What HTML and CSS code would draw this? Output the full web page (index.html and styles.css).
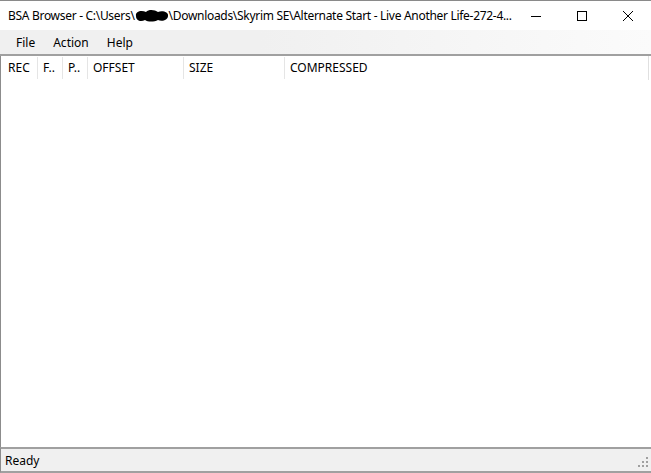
FILE: index.html
```html
<!DOCTYPE html>
<html lang="en">

<head>
    <meta charset="UTF-8">
    <title>BSA Browser</title>
    <link rel="stylesheet" href="styles.css">
</head>

<body>
    <div class="window">
        <div class="titlebar">
            <div class="title">BSA Browser - C:\Users\<svg class="blob" width="36" height="13" viewBox="0 0 36 13"><path d="M2 7 C1 2 8 1 12 3 C15 0 21 1 24 3 C28 1 35 3 34 7 C34 11 28 13 24 11 C20 13 14 13 11 11 C7 13 2 12 2 7 Z" fill="#000"/></svg>\Downloads\Skyrim SE\Alternate Start - Live Another Life-272-4...</div>
            <div class="controls">
                <div class="ctl"><svg width="10" height="10" viewBox="0 0 10 10"><path d="M0 5.5h10" stroke="#000" stroke-width="1"/></svg></div>
                <div class="ctl"><svg width="10" height="10" viewBox="0 0 10 10"><rect x="0.5" y="0.5" width="9" height="9" fill="none" stroke="#000" stroke-width="1"/></svg></div>
                <div class="ctl"><svg width="10" height="10" viewBox="0 0 10 10"><path d="M0 0L10 10M10 0L0 10" stroke="#000" stroke-width="1"/></svg></div>
            </div>
        </div>

        <div class="menubar">
            <span class="menu">File</span>
            <span class="menu">Action</span>
            <span class="menu">Help</span>
        </div>

        <div class="list">
            <div class="header">
                <div class="col first" style="width: 37px">REC</div>
                <div class="col" style="width: 25px">F..</div>
                <div class="col" style="width: 25px">P..</div>
                <div class="col" style="width: 96px">OFFSET</div>
                <div class="col" style="width: 101px">SIZE</div>
                <div class="col last">COMPRESSED</div>
            </div>
            <div class="rows"></div>
        </div>

        <div class="statusbar">
            <span class="status">Ready</span>
            <svg class="grip" width="12" height="12" viewBox="0 0 12 12" fill="#a0a0a0">
                <rect x="9" y="1" width="2" height="2"/>
                <rect x="5" y="5" width="2" height="2"/><rect x="9" y="5" width="2" height="2"/>
                <rect x="1" y="9" width="2" height="2"/><rect x="5" y="9" width="2" height="2"/><rect x="9" y="9" width="2" height="2"/>
            </svg>
        </div>
    </div>
</body>

</html>
```

FILE: styles.css
```css
body {
    margin: 0;
    font-family: "Noto Sans", "Open Sans", sans-serif;
    font-size: 12px;
    color: #000;
    background-color: #fff;
}

.window {
    width: 651px;
    height: 473px;
    display: flex;
    flex-direction: column;
    border-top: 1px solid #8a8a8a;
    box-sizing: border-box;
    overflow: hidden;
}

.titlebar {
    height: 29px;
    display: flex;
    align-items: center;
    background-color: #fff;
}

.title {
    flex: 1;
    min-width: 0;
    padding-left: 8px;
    white-space: nowrap;
    overflow: hidden;
    letter-spacing: -0.3px;
    display: flex;
    align-items: center;
}

.blob {
    flex-shrink: 0;
    margin: 0 -1px;
}

.controls {
    display: flex;
    flex-shrink: 0;
    height: 100%;
}

.ctl {
    width: 46px;
    display: flex;
    align-items: center;
    justify-content: center;
}

.menubar {
    height: 24px;
    display: flex;
    align-items: center;
    padding-left: 9px;
    background: linear-gradient(to right, #f0f0f0, #f0f0f0 40%, #fbfbfb);
    border-bottom: 2px solid #a0a0a0;
}

.menu {
    padding: 0 7px;
    margin-right: 4px;
}

.list {
    flex: 1;
    display: flex;
    flex-direction: column;
    border-left: 1px solid #8c8c8c;
    background-color: #fff;
}

.header {
    height: 24px;
    display: flex;
    align-items: center;
    border-right: 1px solid #e0e0e0;
    margin-right: 2px;
}

.col {
    box-sizing: border-box;
    padding-left: 5px;
    height: 22px;
    line-height: 22px;
    border-right: 1px solid #e5e5e5;
    white-space: nowrap;
    overflow: hidden;
}

.col.first {
    padding-left: 7px;
}

.col.last {
    flex: 1;
    border-right: none;
}

.rows {
    flex: 1;
}

.statusbar {
    height: 22px;
    display: flex;
    align-items: center;
    justify-content: space-between;
    background-color: #f0f0f0;
    border-top: 2px solid #a0a0a0;
    border-bottom: 2px solid #a0a0a0;
    border-left: 1px solid #8c8c8c;
}

.status {
    padding-left: 4px;
}

.grip {
    margin-right: 2px;
    margin-top: 4px;
}
```
